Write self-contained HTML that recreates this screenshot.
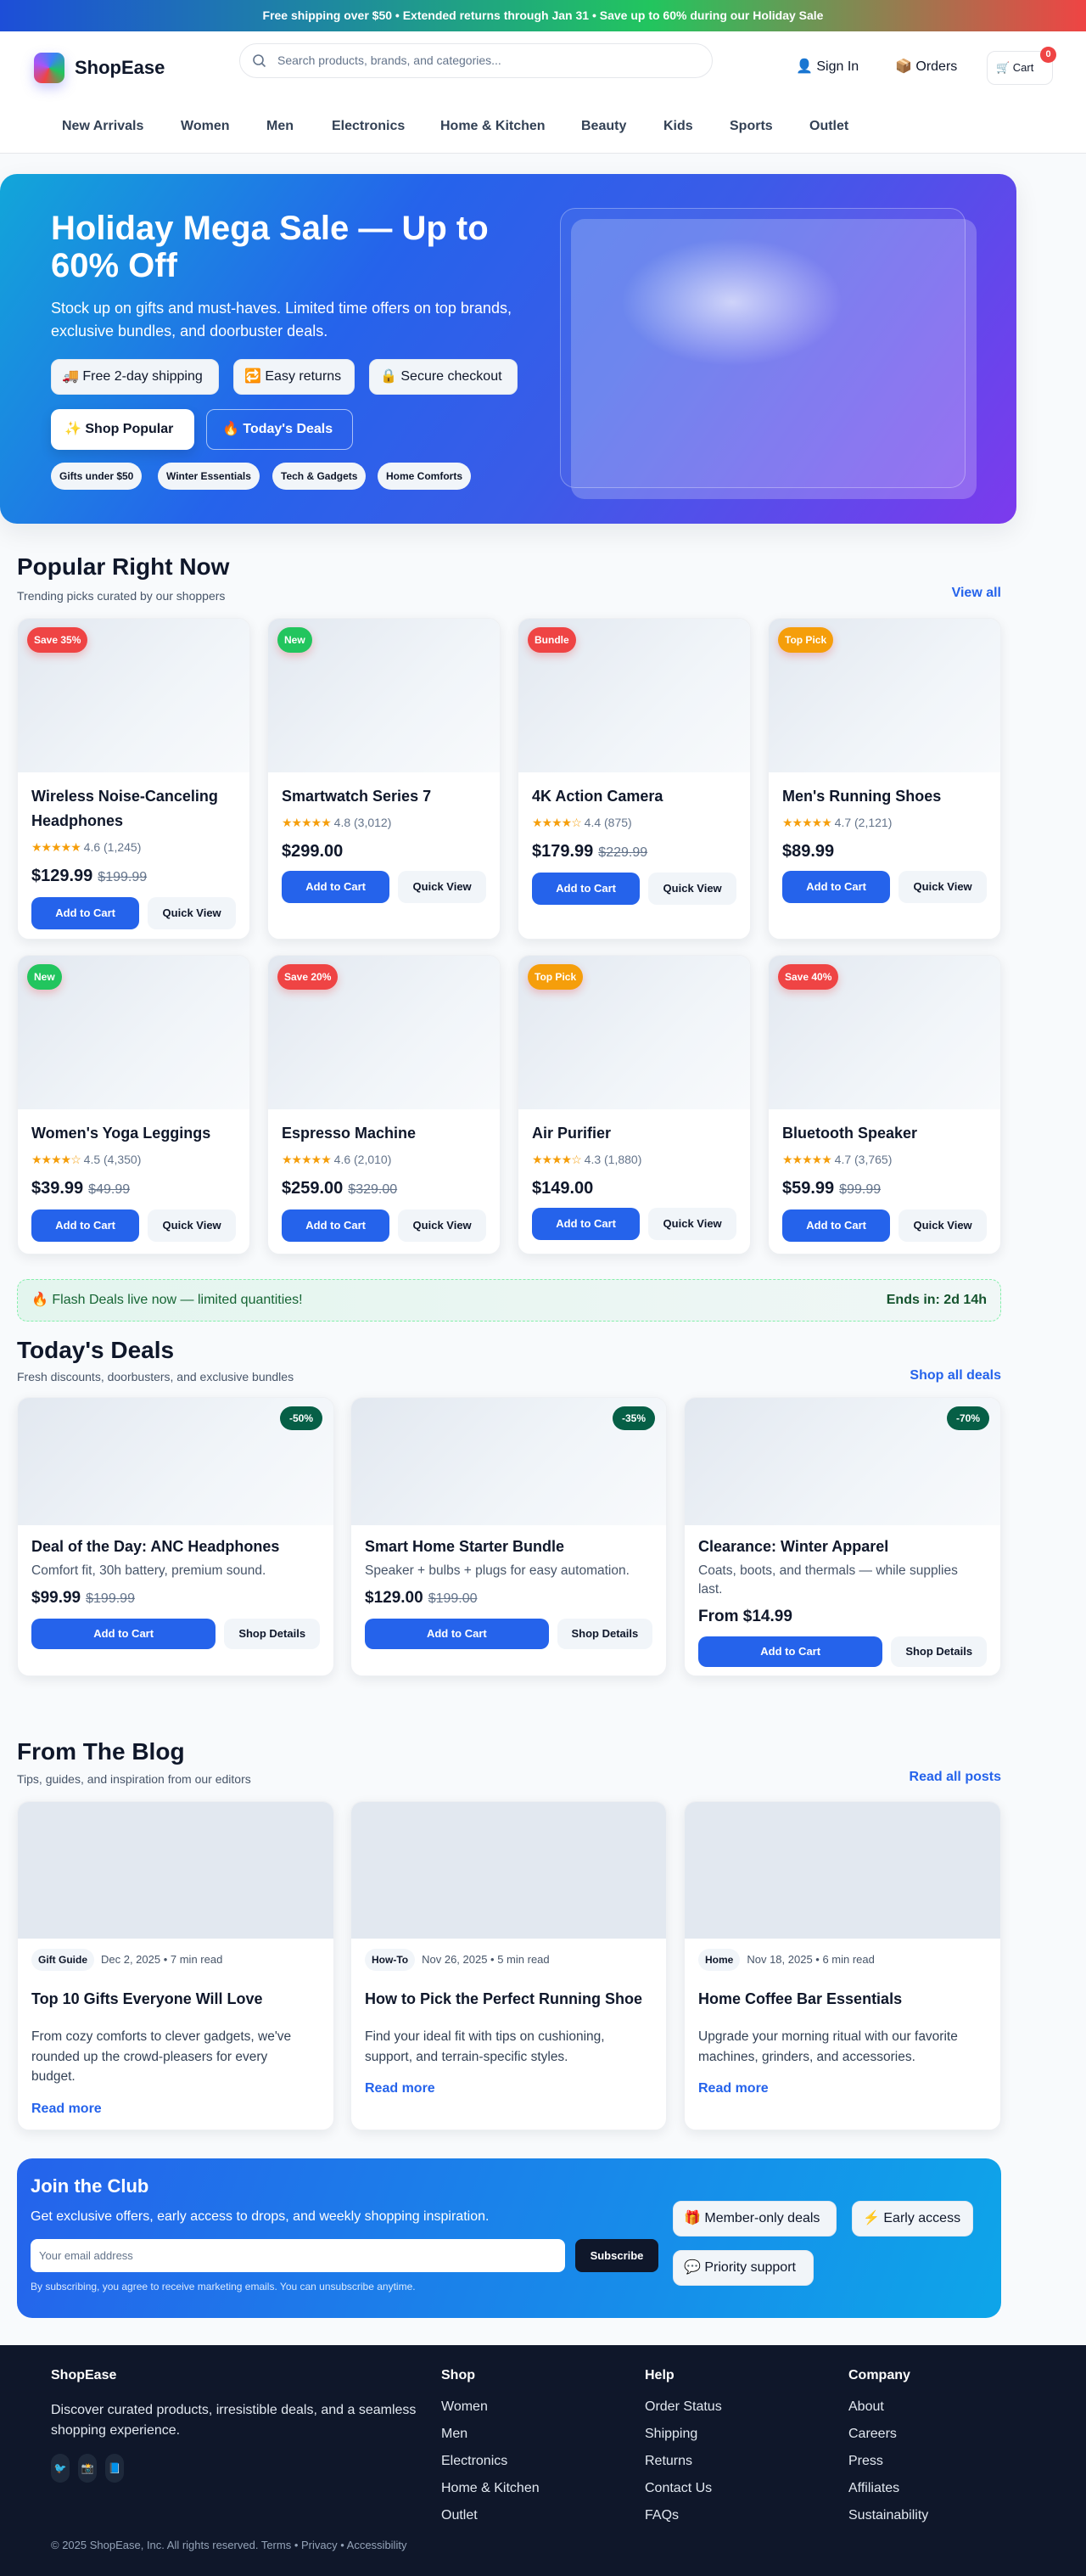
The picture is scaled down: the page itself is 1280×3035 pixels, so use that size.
<!DOCTYPE html>
<html><head><meta charset="utf-8"><style>
*{box-sizing:border-box;margin:0;padding:0}
body{width:1280px;height:3035px;background:#f8fafc;font-family:"Liberation Sans",Arial,sans-serif;color:#0f172a;position:relative;overflow:hidden}
.abs{position:absolute}
.topbar{left:0;top:0;width:1280px;height:37px;background:linear-gradient(90deg,#1d4ed8,#1e88a0 30%,#22c55e 60%,#ef4444);color:#fff;font-weight:700;font-size:14px;text-align:center;line-height:37px}
.header{left:0;top:37px;width:1280px;height:144px;background:#fff;border-bottom:1px solid #e5e7eb}
.logo{left:40px;top:25px;width:36px;height:36px;border-radius:9px;background:conic-gradient(from 200deg,#ef4444,#a855f7,#3b82f6,#22c55e,#ef4444);box-shadow:0 6px 14px rgba(99,102,241,.35)}
.brand{left:88px;top:30px;font-size:22px;font-weight:700}
.search{left:282px;top:14px;width:558px;height:41px;border:1px solid #e5e7eb;border-radius:21px;font-size:14px;color:#64748b;line-height:39px;padding-left:44px}
.nav{top:103px;font-size:16px;color:#334155;font-weight:600}
.hero{left:0;top:205px;width:1198px;height:412px;border-radius:20px;background:linear-gradient(125deg,#12a6d9 0%,#2563eb 35%,#3b5be8 60%,#7c3aed 100%);box-shadow:0 10px 30px rgba(15,23,42,.08);color:#fff}
.chip{position:absolute;height:42px;background:#f1f5f9;border:1px solid #e2e8f0;border-radius:10px;color:#0f172a;font-size:16px;line-height:40px;padding:0 12px;white-space:nowrap}
.tag{position:absolute;top:340px;height:32px;background:#f1f5f9;border-radius:16px;color:#0f172a;font-size:12px;font-weight:700;line-height:32px;padding:0 10px;white-space:nowrap}
h2{font-size:28px;font-weight:700}
.sub{font-size:14px;color:#475569}
.link{color:#2563eb;font-weight:700;font-size:16px}
.card{position:absolute;background:#fff;border-radius:14px;box-shadow:0 4px 14px rgba(15,23,42,.08);border:1px solid #eef0f3;overflow:hidden}
.img{background:linear-gradient(135deg,#e2e8f0,#f1f5f9 60%,#f8fafc)}
.badge{position:absolute;left:11px;top:10px;height:30px;padding:0 8px;border-radius:15px;color:#fff;font-size:12px;font-weight:700;line-height:30px;box-shadow:0 4px 10px rgba(239,68,68,.3)}
.body{padding:14px 16px 0}
.t{font-size:18px;font-weight:700;line-height:29px}
.stars{font-size:14px;color:#64748b;line-height:20px;margin-top:6px}
.stars b{color:#f59e0b;font-weight:400;letter-spacing:-1px}
.price{font-size:20px;font-weight:700;line-height:28px;margin-top:10px}
.price s{font-size:16px;color:#64748b;font-weight:400;margin-left:6px}
.btns{display:flex;gap:10px;margin-top:9px}
.add{width:130px;height:38px;border-radius:10px;background:#2563eb;color:#fff;font-size:13px;font-weight:700;line-height:38px;text-align:center}
.qv{width:106px;height:38px;border-radius:10px;background:#f1f5f9;font-size:13px;font-weight:700;line-height:38px;text-align:center}
.foot a{display:block;color:#e2e8f0;font-size:16px;line-height:32px}
.dd{font-size:15.5px;color:#475569;line-height:22px;margin-top:5px;white-space:nowrap}
.bd{font-size:15.5px;color:#334155;line-height:23.5px;margin-top:19px;white-space:nowrap}
</style></head><body>
<div class="abs topbar">Free shipping over $50 • Extended returns through Jan 31 • Save up to 60% during our Holiday Sale</div>
<div class="abs header">
<div class="abs logo"></div><div class="abs brand">ShopEase</div>
<div class="abs search"><svg class="abs" style="left:14px;top:11px" width="18" height="18" viewBox="0 0 18 18" fill="none" stroke="#64748b" stroke-width="1.6"><circle cx="7.5" cy="7.5" r="5.5"/><path d="M11.5 11.5l4 4"/></svg>Search products, brands, and categories...</div>
<div class="abs" style="left:938px;top:31px;font-size:16px">👤 Sign In</div>
<div class="abs" style="left:1055px;top:31px;font-size:16px">📦 Orders</div>
<div class="abs" style="left:1163px;top:23px;width:78px;height:40px;border:1px solid #e5e7eb;border-radius:10px;font-size:13px;line-height:38px;padding-left:10px">🛒 Cart</div>
<div class="abs" style="left:1226px;top:18px;width:19px;height:19px;border-radius:50%;background:#ef4444;color:#fff;font-size:11px;font-weight:700;text-align:center;line-height:19px">0</div>
<div class="abs nav" style="left:73px">New Arrivals</div><div class="abs nav" style="left:213px">Women</div><div class="abs nav" style="left:314px">Men</div><div class="abs nav" style="left:391px">Electronics</div><div class="abs nav" style="left:519px">Home &amp; Kitchen</div><div class="abs nav" style="left:685px">Beauty</div><div class="abs nav" style="left:782px">Kids</div><div class="abs nav" style="left:860px">Sports</div><div class="abs nav" style="left:954px">Outlet</div>
</div>

<div class="abs hero">
<div class="abs" style="left:60px;top:42px;font-size:40px;font-weight:700;line-height:44px;width:580px">Holiday Mega Sale — Up to 60% Off</div>
<div class="abs" style="left:60px;top:145px;font-size:18px;line-height:27px;width:580px">Stock up on gifts and must-haves. Limited time offers on top brands, exclusive bundles, and doorbuster deals.</div>
<div class="chip" style="left:60px;top:218px;width:198px">🚚 Free 2-day shipping</div>
<div class="chip" style="left:275px;top:218px;width:143px">🔁 Easy returns</div>
<div class="chip" style="left:435px;top:218px;width:175px">🔒 Secure checkout</div>
<div class="abs" style="left:60px;top:277px;width:169px;height:48px;background:#fff;border-radius:10px;color:#0f172a;font-weight:700;font-size:16px;line-height:48px;padding-left:16px;box-shadow:0 6px 14px rgba(0,0,0,.12)">✨ Shop Popular</div>
<div class="abs" style="left:243px;top:277px;width:173px;height:48px;border:1px solid rgba(255,255,255,.6);border-radius:10px;font-weight:700;font-size:16px;line-height:46px;padding-left:18px">🔥 Today's Deals</div>
<div class="tag" style="left:60px">Gifts under $50</div><div class="tag" style="left:186px">Winter Essentials</div><div class="tag" style="left:321px">Tech &amp; Gadgets</div><div class="tag" style="left:445px">Home Comforts</div>
<div class="abs" style="left:660px;top:40px;width:478px;height:330px;border:1px solid rgba(255,255,255,.3);border-radius:18px;background:rgba(255,255,255,.06)"></div>
<div class="abs" style="left:673px;top:53px;width:478px;height:330px;border-radius:16px;background:radial-gradient(ellipse 130px 75px at 190px 98px,rgba(255,255,255,.65),rgba(255,255,255,0) 100%),rgba(255,255,255,.22)"></div>
</div>

<h2 class="abs" style="left:20px;top:652px">Popular Right Now</h2>
<div class="abs sub" style="left:20px;top:694px">Trending picks curated by our shoppers</div>
<div class="abs link" style="right:100px;top:690px">View all</div>

<div class="card" style="left:20px;top:728px;width:275px;height:379px"><div class="img" style="height:181px"></div><div class="badge" style="background:#ef4444">Save 35%</div><div class="body"><div class="t">Wireless Noise-Canceling Headphones</div><div class="stars"><b>★★★★★</b> 4.6 (1,245)</div><div class="price">$129.99<s>$199.99</s></div><div class="btns"><div class="add">Add to Cart</div><div class="qv">Quick View</div></div></div></div>
<div class="card" style="left:315px;top:728px;width:275px;height:379px"><div class="img" style="height:181px"></div><div class="badge" style="background:#22c55e">New</div><div class="body"><div class="t">Smartwatch Series 7</div><div class="stars"><b>★★★★★</b> 4.8 (3,012)</div><div class="price">$299.00</div><div class="btns"><div class="add">Add to Cart</div><div class="qv">Quick View</div></div></div></div>
<div class="card" style="left:610px;top:728px;width:275px;height:379px"><div class="img" style="height:181px"></div><div class="badge" style="background:#ef4444">Bundle</div><div class="body"><div class="t">4K Action Camera</div><div class="stars"><b>★★★★☆</b> 4.4 (875)</div><div class="price">$179.99<s>$229.99</s></div><div class="btns"><div class="add">Add to Cart</div><div class="qv">Quick View</div></div></div></div>
<div class="card" style="left:905px;top:728px;width:275px;height:379px"><div class="img" style="height:181px"></div><div class="badge" style="background:#f59e0b">Top Pick</div><div class="body"><div class="t">Men's Running Shoes</div><div class="stars"><b>★★★★★</b> 4.7 (2,121)</div><div class="price">$89.99</div><div class="btns"><div class="add">Add to Cart</div><div class="qv">Quick View</div></div></div></div>

<div class="card" style="left:20px;top:1125px;width:275px;height:353px"><div class="img" style="height:181px"></div><div class="badge" style="background:#22c55e">New</div><div class="body"><div class="t">Women's Yoga Leggings</div><div class="stars"><b>★★★★☆</b> 4.5 (4,350)</div><div class="price">$39.99<s>$49.99</s></div><div class="btns"><div class="add">Add to Cart</div><div class="qv">Quick View</div></div></div></div>
<div class="card" style="left:315px;top:1125px;width:275px;height:353px"><div class="img" style="height:181px"></div><div class="badge" style="background:#ef4444">Save 20%</div><div class="body"><div class="t">Espresso Machine</div><div class="stars"><b>★★★★★</b> 4.6 (2,010)</div><div class="price">$259.00<s>$329.00</s></div><div class="btns"><div class="add">Add to Cart</div><div class="qv">Quick View</div></div></div></div>
<div class="card" style="left:610px;top:1125px;width:275px;height:353px"><div class="img" style="height:181px"></div><div class="badge" style="background:#f59e0b">Top Pick</div><div class="body"><div class="t">Air Purifier</div><div class="stars"><b>★★★★☆</b> 4.3 (1,880)</div><div class="price">$149.00</div><div class="btns"><div class="add">Add to Cart</div><div class="qv">Quick View</div></div></div></div>
<div class="card" style="left:905px;top:1125px;width:275px;height:353px"><div class="img" style="height:181px"></div><div class="badge" style="background:#ef4444">Save 40%</div><div class="body"><div class="t">Bluetooth Speaker</div><div class="stars"><b>★★★★★</b> 4.7 (3,765)</div><div class="price">$59.99<s>$99.99</s></div><div class="btns"><div class="add">Add to Cart</div><div class="qv">Quick View</div></div></div></div>

<div class="abs" style="left:20px;top:1507px;width:1160px;height:50px;border:1px dashed #86efac;border-radius:12px;background:linear-gradient(90deg,#e3f5ee,#f0f7f6);font-size:16px;line-height:48px;padding:0 16px;color:#166534">🔥 Flash Deals live now — limited quantities!<span style="float:right;font-weight:700;color:#14532d">Ends in: 2d 14h</span></div>

<h2 class="abs" style="left:20px;top:1575px">Today's Deals</h2>
<div class="abs sub" style="left:20px;top:1614px">Fresh discounts, doorbusters, and exclusive bundles</div>
<div class="abs link" style="right:100px;top:1612px">Shop all deals</div>

<div class="card" style="left:20px;top:1646px;width:374px;height:329px"><div class="img" style="height:150px"></div><div class="abs" style="right:13px;top:10px;height:28px;width:50px;border-radius:14px;background:#065f46;color:#fff;font-size:12px;font-weight:700;line-height:28px;text-align:center">-50%</div><div class="body" style="padding-top:12px"><div style="font-size:18px;font-weight:700;line-height:26px">Deal of the Day: ANC Headphones</div><div class="dd">Comfort fit, 30h battery, premium sound.</div><div class="price" style="margin-top:7px;font-size:19px">$99.99<s>$199.99</s></div><div class="btns"><div class="add" style="width:222px;height:36px;line-height:36px">Add to Cart</div><div class="qv" style="width:115px;height:36px;line-height:36px">Shop Details</div></div></div></div>
<div class="card" style="left:413px;top:1646px;width:373px;height:329px"><div class="img" style="height:150px"></div><div class="abs" style="right:13px;top:10px;height:28px;width:50px;border-radius:14px;background:#065f46;color:#fff;font-size:12px;font-weight:700;line-height:28px;text-align:center">-35%</div><div class="body" style="padding-top:12px"><div style="font-size:18px;font-weight:700;line-height:26px">Smart Home Starter Bundle</div><div class="dd">Speaker + bulbs + plugs for easy automation.</div><div class="price" style="margin-top:7px;font-size:19px">$129.00<s>$199.00</s></div><div class="btns"><div class="add" style="width:222px;height:36px;line-height:36px">Add to Cart</div><div class="qv" style="width:115px;height:36px;line-height:36px">Shop Details</div></div></div></div>
<div class="card" style="left:806px;top:1646px;width:374px;height:329px"><div class="img" style="height:150px"></div><div class="abs" style="right:13px;top:10px;height:28px;width:50px;border-radius:14px;background:#065f46;color:#fff;font-size:12px;font-weight:700;line-height:28px;text-align:center">-70%</div><div class="body" style="padding-top:12px"><div style="font-size:18px;font-weight:700;line-height:26px">Clearance: Winter Apparel</div><div class="dd">Coats, boots, and thermals — while supplies<br>last.</div><div class="price" style="margin-top:7px;font-size:19px">From $14.99</div><div class="btns"><div class="add" style="width:222px;height:36px;line-height:36px">Add to Cart</div><div class="qv" style="width:115px;height:36px;line-height:36px">Shop Details</div></div></div></div>

<h2 class="abs" style="left:20px;top:2048px">From The Blog</h2>
<div class="abs sub" style="left:20px;top:2088px">Tips, guides, and inspiration from our editors</div>
<div class="abs link" style="right:100px;top:2085px">Read all posts</div>

<div class="card" style="left:20px;top:2122px;width:374px;height:388px"><div style="height:161px;background:#e2e8f0"></div><div class="body" style="padding-top:12px"><div style="font-size:13px;color:#475569;line-height:26px"><span style="display:inline-block;background:#f1f5f9;border-radius:13px;padding:0 8px;font-weight:700;color:#0f172a;font-size:12px;margin-right:8px">Gift Guide</span>Dec 2, 2025 • 7 min read</div><div style="font-size:18px;font-weight:700;line-height:28px;margin-top:19px">Top 10 Gifts Everyone Will Love</div><div class="bd">From cozy comforts to clever gadgets, we've<br>rounded up the crowd-pleasers for every<br>budget.</div><div class="link" style="margin-top:17px">Read more</div></div></div>
<div class="card" style="left:413px;top:2122px;width:373px;height:388px"><div style="height:161px;background:#e2e8f0"></div><div class="body" style="padding-top:12px"><div style="font-size:13px;color:#475569;line-height:26px"><span style="display:inline-block;background:#f1f5f9;border-radius:13px;padding:0 8px;font-weight:700;color:#0f172a;font-size:12px;margin-right:8px">How-To</span>Nov 26, 2025 • 5 min read</div><div style="font-size:18px;font-weight:700;line-height:28px;margin-top:19px">How to Pick the Perfect Running Shoe</div><div class="bd">Find your ideal fit with tips on cushioning,<br>support, and terrain-specific styles.</div><div class="link" style="margin-top:17px">Read more</div></div></div>
<div class="card" style="left:806px;top:2122px;width:374px;height:388px"><div style="height:161px;background:#e2e8f0"></div><div class="body" style="padding-top:12px"><div style="font-size:13px;color:#475569;line-height:26px"><span style="display:inline-block;background:#f1f5f9;border-radius:13px;padding:0 8px;font-weight:700;color:#0f172a;font-size:12px;margin-right:8px">Home</span>Nov 18, 2025 • 6 min read</div><div style="font-size:18px;font-weight:700;line-height:28px;margin-top:19px">Home Coffee Bar Essentials</div><div class="bd">Upgrade your morning ritual with our favorite<br>machines, grinders, and accessories.</div><div class="link" style="margin-top:17px">Read more</div></div></div>

<div class="abs" style="left:20px;top:2543px;width:1160px;height:188px;border-radius:18px;background:linear-gradient(110deg,#2563eb,#0ea5e9);color:#fff">
<div class="abs" style="left:16px;top:20px;font-size:22px;font-weight:700">Join the Club</div>
<div class="abs" style="left:16px;top:60px;font-size:16px">Get exclusive offers, early access to drops, and weekly shopping inspiration.</div>
<div class="abs" style="left:16px;top:95px;width:630px;height:39px;background:#fff;border-radius:8px;color:#64748b;font-size:13px;line-height:39px;padding-left:10px">Your email address</div>
<div class="abs" style="left:658px;top:95px;width:98px;height:39px;background:#0f172a;border-radius:8px;font-size:13px;font-weight:700;line-height:39px;text-align:center">Subscribe</div>
<div class="abs" style="left:16px;top:144px;font-size:12px;color:#dbeafe">By subscribing, you agree to receive marketing emails. You can unsubscribe anytime.</div>
<div class="chip" style="left:773px;top:50px;width:193px">🎁 Member-only deals</div>
<div class="chip" style="left:984px;top:50px;width:143px">⚡ Early access</div>
<div class="chip" style="left:773px;top:108px;width:166px">💬 Priority support</div>
</div>

<div class="abs foot" style="left:0;top:2763px;width:1280px;height:272px;background:#0f172a;color:#e2e8f0">
<div class="abs" style="left:60px;top:27px;font-weight:700;font-size:16px;color:#fff">ShopEase</div>
<div class="abs" style="left:60px;top:65px;width:440px;font-size:16px;line-height:24px">Discover curated products, irresistible deals, and a seamless shopping experience.</div>
<div class="abs" style="left:60px;top:128px;width:22px;height:34px;border-radius:11px;background:#1e293b;font-size:12px;text-align:center;line-height:34px">🐦</div>
<div class="abs" style="left:92px;top:128px;width:22px;height:34px;border-radius:11px;background:#1e293b;font-size:12px;text-align:center;line-height:34px">📸</div>
<div class="abs" style="left:124px;top:128px;width:22px;height:34px;border-radius:11px;background:#1e293b;font-size:12px;text-align:center;line-height:34px">📘</div>
<div class="abs" style="left:520px;top:27px"><div style="font-weight:700;color:#fff;margin-bottom:12px">Shop</div><a>Women</a><a>Men</a><a>Electronics</a><a>Home &amp; Kitchen</a><a>Outlet</a></div>
<div class="abs" style="left:760px;top:27px"><div style="font-weight:700;color:#fff;margin-bottom:12px">Help</div><a>Order Status</a><a>Shipping</a><a>Returns</a><a>Contact Us</a><a>FAQs</a></div>
<div class="abs" style="left:1000px;top:27px"><div style="font-weight:700;color:#fff;margin-bottom:12px">Company</div><a>About</a><a>Careers</a><a>Press</a><a>Affiliates</a><a>Sustainability</a></div>
<div class="abs" style="left:60px;top:228px;font-size:13px;color:#94a3b8">© 2025 ShopEase, Inc. All rights reserved. Terms • Privacy • Accessibility</div>
</div>
</body></html>
